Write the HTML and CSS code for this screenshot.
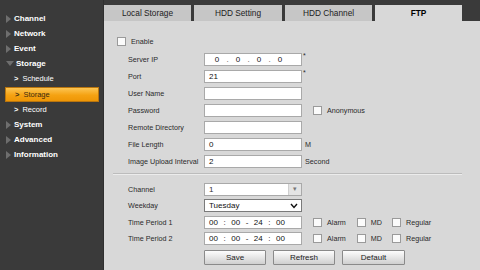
FILE: index.html
```html
<!DOCTYPE html>
<html>
<head>
<meta charset="utf-8">
<link rel="stylesheet" href="styles.css">
</head>
<body>
<div class="app">
  <nav class="sidebar">
    <div class="nav-item"><span class="tri"></span>Channel</div>
    <div class="nav-item"><span class="tri"></span>Network</div>
    <div class="nav-item"><span class="tri"></span>Event</div>
    <div class="nav-item"><span class="tri down"></span>Storage</div>
    <div class="sub-item"><span class="chev">&gt;</span>Schedule</div>
    <div class="sub-item active"><span class="chev">&gt;</span>Storage</div>
    <div class="sub-item"><span class="chev">&gt;</span>Record</div>
    <div class="nav-item"><span class="tri"></span>System</div>
    <div class="nav-item"><span class="tri"></span>Advanced</div>
    <div class="nav-item"><span class="tri"></span>Information</div>
  </nav>
  <main class="main">
    <div class="tabs">
      <div class="tab t1">Local Storage</div>
      <div class="tab t2">HDD Setting</div>
      <div class="tab t3">HDD Channel</div>
      <div class="tab t4 active">FTP</div>
    </div>
    <div class="panel">
      <div class="enable-row"><span class="cb"></span><span class="lbl">Enable</span></div>
      <div class="section">
        <div class="row"><span class="label">Server IP</span><span class="field ip"><span>0</span><i>.</i><span>0</span><i>.</i><span>0</span><i>.</i><span>0</span></span><span class="star">*</span></div>
        <div class="row"><span class="label">Port</span><span class="field">21</span><span class="star">*</span></div>
        <div class="row"><span class="label">User Name</span><span class="field"></span></div>
        <div class="row"><span class="label">Password</span><span class="field"></span><span class="cb anon"></span><span class="lbl">Anonymous</span></div>
        <div class="row"><span class="label">Remote Directory</span><span class="field"></span></div>
        <div class="row"><span class="label">File Length</span><span class="field">0</span><span class="unit">M</span></div>
        <div class="row"><span class="label">Image Upload Interval</span><span class="field">2</span><span class="unit">Second</span></div>
      </div>
      <div class="divider"></div>
      <div class="section second">
        <div class="row r2"><span class="label">Channel</span><span class="field select dis">1<span class="ddbtn">&#9662;</span></span></div>
        <div class="row r2"><span class="label">Weekday</span><span class="field select wk">Tuesday<svg class="chevron" width="8" height="6" viewBox="0 0 8 6"><path d="M1 1 L4 4.5 L7 1" fill="none" stroke="#111" stroke-width="1.4"/></svg></span></div>
        <div class="row r2"><span class="label">Time Period 1</span><span class="field tp"><span>00</span><span>:</span><span>00</span><span>-</span><span>24</span><span>:</span><span>00</span></span>
          <span class="cb c-a"></span><span class="lbl">Alarm</span><span class="cb c-m"></span><span class="lbl">MD</span><span class="cb c-r"></span><span class="lbl">Regular</span></div>
        <div class="row r2"><span class="label">Time Period 2</span><span class="field tp"><span>00</span><span>:</span><span>00</span><span>-</span><span>24</span><span>:</span><span>00</span></span>
          <span class="cb c-a"></span><span class="lbl">Alarm</span><span class="cb c-m"></span><span class="lbl">MD</span><span class="cb c-r"></span><span class="lbl">Regular</span></div>
      </div>
      <div class="buttons">
        <button class="btn">Save</button>
        <button class="btn">Refresh</button>
        <button class="btn">Default</button>
      </div>
    </div>
  </main>
</div>
</body>
</html>
```
FILE: styles.css
```css
* { box-sizing: border-box; }
html, body { margin: 0; padding: 0; }
body {
  width: 480px; height: 270px; overflow: hidden;
  background: #3a3a3a;
  font-family: "Liberation Sans", Arial, sans-serif;
}
.app { display: flex; height: 270px; }
.sidebar {
  width: 104px; flex: none;
  background: #3a3a3a;
  border-right: 1px solid #2f2f2f;
  padding-top: 11px;
}
.nav-item {
  height: 15px; display: flex; align-items: center;
  color: #fff; font-weight: bold; font-size: 8px;
  padding-left: 6px;
}
.tri {
  width: 0; height: 0; margin-right: 3px;
  border-top: 4px solid transparent; border-bottom: 4px solid transparent;
  border-left: 5px solid #6e6e6e;
}
.tri.down {
  border-left: 4px solid transparent; border-right: 4px solid transparent;
  border-top: 5px solid #6e6e6e; border-bottom: 0; margin-right: 2px;
}
.sub-item {
  height: 15px; display: flex; align-items: center;
  color: #fff; font-size: 7.5px; padding-left: 14px;
}
.chev { font-weight: bold; margin-right: 4px; }
.sub-item.active {
  margin: 1px 4px 0 5px; padding-left: 9px; height: 15px;
  background: linear-gradient(#fcc553, #f5a212 55%, #ee9606);
  border: 1px solid #b9750e;
  color: #3a2a10;
}
.main { flex: 1; display: flex; flex-direction: column; padding-top: 5px; background: #3a3a3a; }
.tabs { display: flex; gap: 3px; width: 358px; height: 16px; }
.tab {
  background: #c6c6c6; color: #222; font-size: 8.3px;
  display: flex; align-items: center; justify-content: center;
}
.t1 { width: 87px; } .t2 { width: 88px; } .t3 { width: 87px; } .t4 { width: 87px; }
.tab.active { background: #d8d8d8; font-weight: bold; color: #000; }
.panel { flex: 1; background: #d8d8d8; padding-top: 15px; color: #2a2a2a; font-size: 7.2px; }
.enable-row { display: flex; align-items: center; height: 11px; padding-left: 13px; }
.cb {
  width: 9px; height: 9px; flex: none;
  background: #fbfbfb; border: 1px solid #9a9a9a;
}
.lbl { margin-left: 5px; }
.section { padding-top: 4px; }
.row { display: flex; align-items: center; height: 17px; }
.r2 { height: 16.5px; }
.label { width: 100px; padding-left: 24px; flex: none; }
.field {
  width: 98px; height: 13px; flex: none;
  background: #fff; border: 1px solid #a9a9a9;
  display: flex; align-items: center; padding-left: 4px;
  font-size: 8px; color: #111;
}
.field.ip { padding: 0 0 0 9px; }
.field.ip span { width: 6px; text-align: center; }
.field.ip i { font-style: normal; width: 15px; text-align: center; color: #555; }
.star { align-self: flex-start; margin-top: 1px; margin-left: 1px; font-size: 7px; }
.unit { margin-left: 3px; }
.anon { margin-left: 11px; }
.divider { margin: 3px 18px 0 9px; height: 2px; border-top: 1px solid #bcbcbc; border-bottom: 1px solid #ececec; }
.second { padding-top: 6px; }
.select { position: relative; }
.dis { color: #333; }
.ddbtn {
  position: absolute; right: 0; top: 0; bottom: 0; width: 13px;
  background: #e4e4e4; border-left: 1px solid #cfcfcf;
  font-size: 7px; color: #777; display: flex; align-items: center; justify-content: center;
}
.wk { border-color: #7a7a7a; }
.chevron { position: absolute; right: 3px; top: 3px; }
.field.tp { justify-content: space-between; padding: 0 16px 0 4px; }
.c-a { margin-left: 11px; }
.c-m { margin-left: 11px; }
.c-r { margin-left: 10px; }
.buttons { display: flex; gap: 7px; padding-left: 100px; margin-top: 3px; }
.btn {
  width: 62px; height: 15px; padding: 0;
  font-family: "Liberation Sans", Arial, sans-serif; font-size: 8px; color: #222;
  background: linear-gradient(#fdfdfd, #e6e6e6 50%, #cfcfcf);
  border: 1px solid #8a8a8a; border-radius: 1px;
}
.btn:nth-child(3) { width: 63px; }
```
